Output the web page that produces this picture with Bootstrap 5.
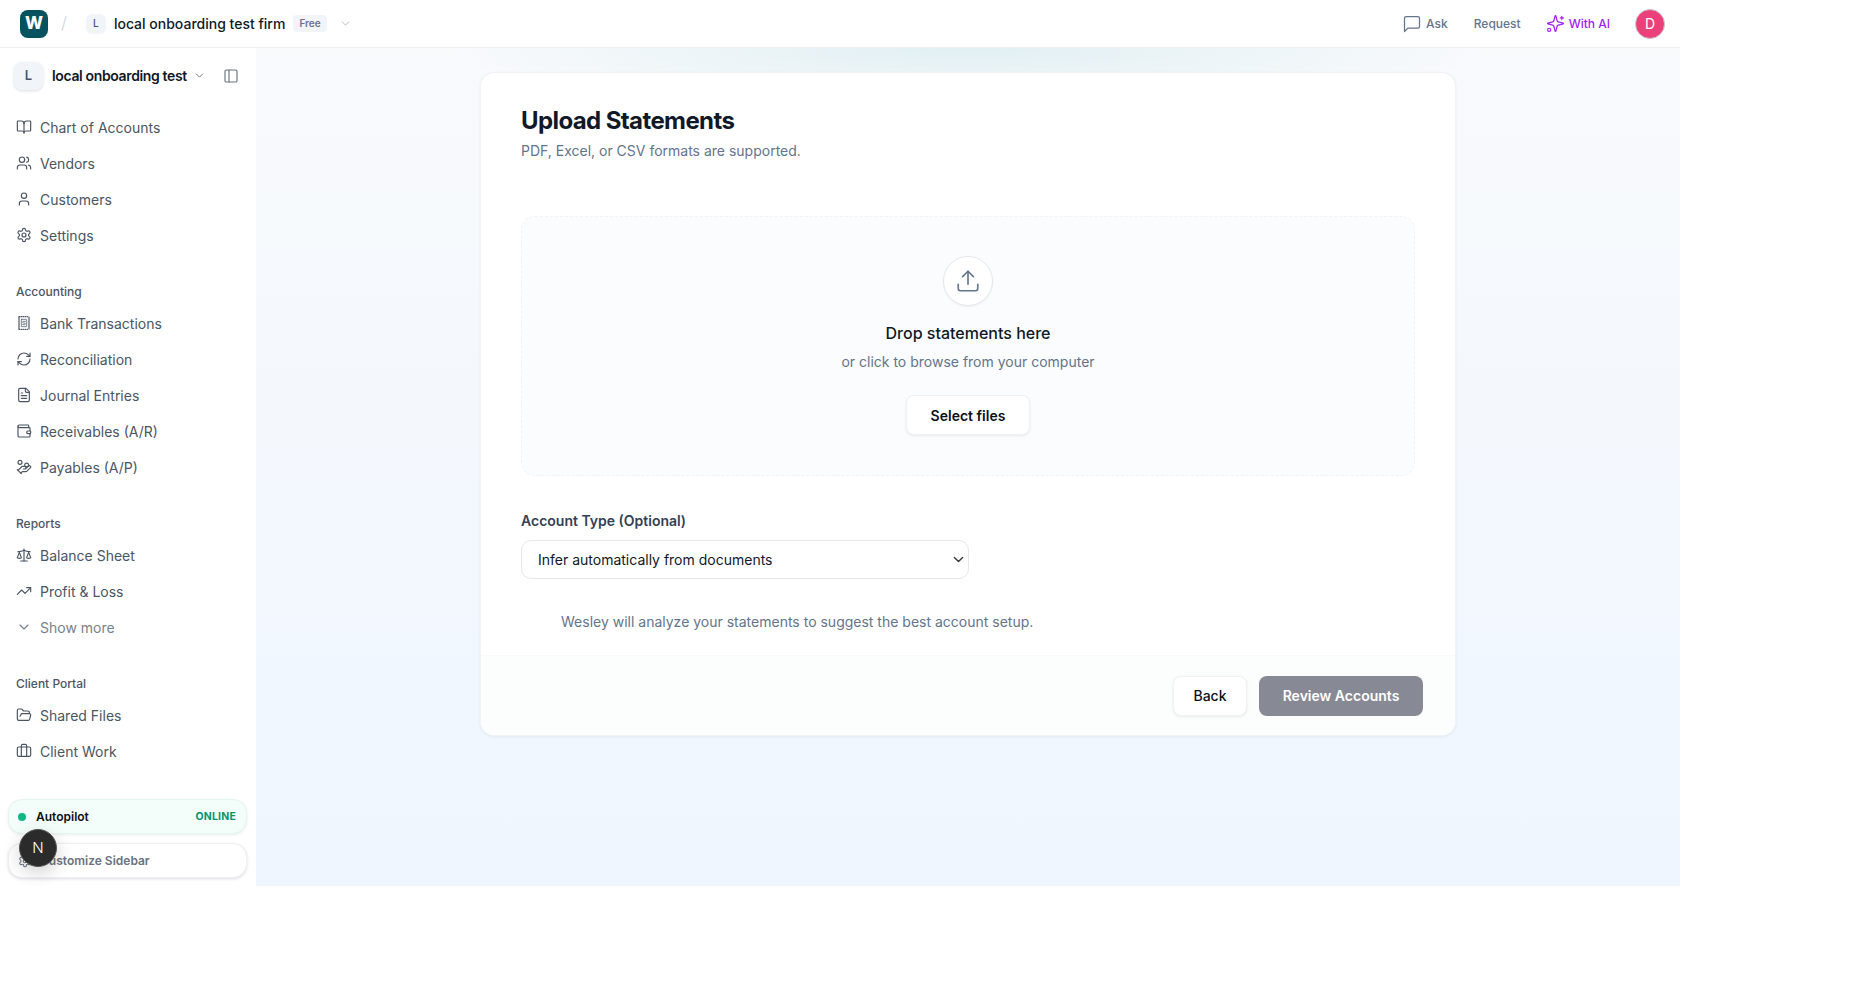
<!DOCTYPE html>
<html lang="en">
<head>
    <meta charset="UTF-8">
    <meta name="viewport" content="width=device-width, initial-scale=1.0">
    <title>Upload Statements</title>
    <link href="https://cdn.jsdelivr.net/npm/bootstrap@5.3.0/dist/css/bootstrap.min.css" rel="stylesheet">
    <style>
        body { font-family: Inter, "Liberation Sans", sans-serif; background: #fff; color: #0f172a; font-size: 14px; }
        .ico { fill: none; stroke: currentColor; stroke-width: 1.75; stroke-linecap: round; stroke-linejoin: round; flex-shrink: 0; }
        .ico-thin { stroke-width: 1.5; }
        .app-frame { width: 1680px; height: 886px; position: relative; overflow: hidden; }
        .top-bar { height: 48px; border-bottom: 1px solid #eef0f3; padding: 0 15px 0 20px; background: #fff; }
        .logo-box { width: 28px; height: 28px; border-radius: 8px; background: #06535f; color: #fff; font-weight: 800; font-size: 17px; }
        .crumb-slash { color: #cbd5e1; font-size: 17px; margin: 0 19px 0 13px; font-weight: 300; }
        .firm-chip { width: 20px; height: 20px; border-radius: 6px; background: #f1f5f9; color: #475569; font-size: 10px; font-weight: 500; margin-right: 8px; }
        .firm-name { font-weight: 500; font-size: 14px; color: #111827; }
        .free-tag { background: #f1f5f9; color: #64748b; font-size: 10px; font-weight: 600; border-radius: 4px; padding: 0 6px; height: 17px; line-height: 17px; margin: 0 12px 0 8px; }
        .top-link { color: #64748b; font-size: 12px; font-weight: 500; gap: 4px; }
        .link-ask { margin-right: 26px; }
        .link-request { margin-right: 25px; }
        .ai-link { color: #a21cf5; margin-right: 25px; }
        .user-dot { width: 30px; height: 30px; border-radius: 50%; background: #ec407a; color: #fff; font-size: 14px; border: 1px solid #c9c9cf; }
        .side-col { width: 256px; background: #fff; flex-shrink: 0; }
        .switch-row { height: 55px; padding: 0 17px 0 14px; }
        .switch-chip { width: 29px; height: 28px; border-radius: 8px; background: #f1f5f9; color: #475569; font-weight: 600; font-size: 13px; box-shadow: 0 1px 3px rgba(15,23,42,.14); margin-right: 9px; }
        .switch-name { font-weight: 600; font-size: 14px; letter-spacing: -.36px; color: #111827; margin-right: 6px; }
        .side-nav { margin-top: 6px; }
        .side-link { height: 36px; padding-left: 16px; gap: 8px; color: #4b5563; font-size: 14px; }
        .side-link.muted-link { color: #7b818c; }
        .side-head { height: 18px; line-height: 18px; padding-left: 16px; margin: 30px 0 4px; font-size: 12px; font-weight: 500; color: #4b5563; }
        .pill-box { height: 35px; margin: 0 9px 0 8px; border-radius: 14px; font-size: 12px; font-weight: 600; padding: 0 10px 0 9px; }
        .pilot-box { background: #f3fdf9; border: 1px solid #e3f6ee; box-shadow: 0 1px 3px rgba(15,23,42,.08); color: #0b0f19; margin-bottom: 9px; }
        .pilot-dot { width: 8px; height: 8px; border-radius: 50%; background: #10b981; margin-right: 10px; }
        .pilot-state { font-size: 10.5px; font-weight: 700; letter-spacing: .2px; color: #059669; }
        .custom-box { background: #fff; border: 1px solid #eef0f3; box-shadow: 0 1px 3px rgba(15,23,42,.14); color: #6b7280; gap: 8px; }
        .next-badge { position: absolute; left: 19px; top: 829px; width: 38px; height: 38px; border-radius: 50%; background: #2b2b2b; color: #fff; font-size: 15px; font-weight: 300; border: 1px solid #555; box-shadow: 0 6px 18px rgba(0,0,0,.18); }
        .main-area { flex: 1; padding-top: 24px; background: radial-gradient(ellipse 520px 60px at 50% 0, #e1eff3 0, rgba(225,239,243,0) 100%), linear-gradient(180deg, #f8fafc 0, #eff6ff 100%); }
        .upload-card { width: 976px; height: 664px; background: #fff; border: 1px solid #f1f3f5; border-radius: 14px; box-shadow: 0 1px 3px rgba(15,23,42,.06); overflow: hidden; }
        .card-inner { padding: 32px 40px 0; height: 582px; }
        .upload-title { font-size: 24px; font-weight: 700; line-height: 32px; letter-spacing: -.6px; margin: 0 0 4px; color: #111827; }
        .upload-sub { font-size: 14px; line-height: 20px; color: #64748b; margin: 0 0 55px; }
        .drop-zone { height: 260px; background: #fbfcfd; border: 1px dashed #f1f3f6; border-radius: 14px; padding-top: 39px; }
        .drop-circle { width: 50px; height: 50px; border-radius: 50%; background: #fff; border: 1px solid #e5e7eb; color: #64748b; box-shadow: 0 1px 2px rgba(15,23,42,.05); }
        .drop-title { font-size: 16px; font-weight: 500; line-height: 24px; margin: 15px 0 7px; color: #111827; }
        .drop-sub { font-size: 14px; line-height: 20px; color: #64748b; margin: 0 0 23px; }
        .soft-btn { background: #fff; border: 1px solid #f0f1f3; border-radius: 8px; box-shadow: 0 1px 3px rgba(15,23,42,.08); font-size: 14px; color: #0b0f19; font-weight: 600; height: 40px; }
        .back-btn { width: 74px; font-weight: 500; }
        .field-label { display: block; font-size: 14px; font-weight: 600; color: #334155; line-height: 20px; margin: 35px 0 9px; }
        .type-select { width: 448px; height: 39px; padding: 0 30px 0 16px; border: 1px solid #e5e7eb; border-radius: 10px; font-size: 14px; color: #111827; background-position: right 4px center; background-size: 11px; box-shadow: none; }
        .help-line { padding-left: 40px; line-height: 20px; color: #64748b; font-size: 14px; margin: 33px 0 0; }
        .card-foot { height: 80px; background: #fcfdfd; border-top: 1px solid #f8f9fa; padding-right: 32px; gap: 12px; }
        .review-btn { background: #878a94; color: #fff; border: 0; border-radius: 8px; font-size: 14px; font-weight: 600; height: 40px; width: 164px; }
    </style>
</head>
<body>
    <svg width="0" height="0" class="position-absolute">
        <defs>
            <symbol id="i-book" viewBox="0 0 24 24"><path d="M12 7v14"/><path d="M3 18a1 1 0 0 1-1-1V4a1 1 0 0 1 1-1h5a4 4 0 0 1 4 4 4 4 0 0 1 4-4h5a1 1 0 0 1 1 1v13a1 1 0 0 1-1 1h-6a3 3 0 0 0-3 3 3 3 0 0 0-3-3z"/></symbol>
            <symbol id="i-users" viewBox="0 0 24 24"><path d="M16 21v-2a4 4 0 0 0-4-4H6a4 4 0 0 0-4 4v2"/><circle cx="9" cy="7" r="4"/><path d="M22 21v-2a4 4 0 0 0-3-3.87"/><path d="M16 3.13a4 4 0 0 1 0 7.75"/></symbol>
            <symbol id="i-user" viewBox="0 0 24 24"><path d="M19 21v-2a4 4 0 0 0-4-4H9a4 4 0 0 0-4 4v2"/><circle cx="12" cy="7" r="4"/></symbol>
            <symbol id="i-gear" viewBox="0 0 24 24"><path d="M12.22 2h-.44a2 2 0 0 0-2 2v.18a2 2 0 0 1-1 1.73l-.43.25a2 2 0 0 1-2 0l-.15-.08a2 2 0 0 0-2.73.73l-.22.38a2 2 0 0 0 .73 2.73l.15.1a2 2 0 0 1 1 1.72v.51a2 2 0 0 1-1 1.74l-.15.09a2 2 0 0 0-.73 2.73l.22.38a2 2 0 0 0 2.73.73l.15-.08a2 2 0 0 1 2 0l.43.25a2 2 0 0 1 1 1.73V20a2 2 0 0 0 2 2h.44a2 2 0 0 0 2-2v-.18a2 2 0 0 1 1-1.73l.43-.25a2 2 0 0 1 2 0l.15.08a2 2 0 0 0 2.73-.73l.22-.39a2 2 0 0 0-.73-2.73l-.15-.08a2 2 0 0 1-1-1.74v-.5a2 2 0 0 1 1-1.74l.15-.09a2 2 0 0 0 .73-2.73l-.22-.38a2 2 0 0 0-2.73-.73l-.15.08a2 2 0 0 1-2 0l-.43-.25a2 2 0 0 1-1-1.73V4a2 2 0 0 0-2-2z"/><circle cx="12" cy="12" r="3"/></symbol>
            <symbol id="i-bank" viewBox="0 0 24 24"><path d="M4.5 3v18"/><path d="M19.5 3v18"/><path d="M4.5 2.5h15" stroke-dasharray="1 2"/><path d="M4.5 21.5h15" stroke-dasharray="1 2"/><rect x="8" y="6.5" width="8" height="11" rx=".5" stroke-width="1.1"/><path d="M14 9.5h-2.8a1.2 1.2 0 0 0 0 2.5h1.6a1.2 1.2 0 0 1 0 2.5H10" stroke-width="1.1"/></symbol>
            <symbol id="i-sync" viewBox="0 0 24 24"><path d="M3 12a9 9 0 0 1 9-9 9.75 9.75 0 0 1 6.74 2.74L21 8"/><path d="M21 3v5h-5"/><path d="M21 12a9 9 0 0 1-9 9 9.75 9.75 0 0 1-6.74-2.74L3 16"/><path d="M8 16H3v5"/></symbol>
            <symbol id="i-file" viewBox="0 0 24 24"><path d="M15 2H6a2 2 0 0 0-2 2v16a2 2 0 0 0 2 2h12a2 2 0 0 0 2-2V7Z"/><path d="M14 2v4a2 2 0 0 0 2 2h4"/><path d="M10 9H8"/><path d="M16 13H8"/><path d="M16 17H8"/></symbol>
            <symbol id="i-wallet" viewBox="0 0 24 24"><path d="M19 7V4a1 1 0 0 0-1-1H5a2 2 0 0 0 0 4h15a1 1 0 0 1 1 1v4h-3a2 2 0 0 0 0 4h3a1 1 0 0 0 1-1v-2a1 1 0 0 0-1-1"/><path d="M3 5v14a2 2 0 0 0 2 2h15a1 1 0 0 0 1-1v-4"/></symbol>
            <symbol id="i-coins" viewBox="0 0 24 24"><path d="M11 15h2a2 2 0 1 0 0-4h-3c-.6 0-1.1.2-1.4.6L3 17"/><path d="m7 21 1.6-1.4c.3-.4.8-.6 1.4-.6h4c1.1 0 2.1-.4 2.8-1.2l4.6-4.4a2 2 0 0 0-2.75-2.91l-4.2 3.9"/><path d="m2 16 6 6"/><circle cx="16" cy="9" r="2.9"/><circle cx="6" cy="5" r="3"/></symbol>
            <symbol id="i-scale" viewBox="0 0 24 24"><path d="m16 16 3-8 3 8c-.87.65-1.92 1-3 1s-2.13-.35-3-1Z"/><path d="m2 16 3-8 3 8c-.87.65-1.92 1-3 1s-2.13-.35-3-1Z"/><path d="M7 21h10"/><path d="M12 3v18"/><path d="M3 7h2c2 0 5-1 7-2 2 1 5 2 7 2h2"/></symbol>
            <symbol id="i-trend" viewBox="0 0 24 24"><polyline points="22 7 13.5 15.5 8.5 10.5 2 17"/><polyline points="16 7 22 7 22 13"/></symbol>
            <symbol id="i-down" viewBox="0 0 24 24"><path d="m6 9 6 6 6-6"/></symbol>
            <symbol id="i-folder" viewBox="0 0 24 24"><path d="m6 14 1.5-2.9A2 2 0 0 1 9.24 10H20a2 2 0 0 1 1.94 2.5l-1.54 6a2 2 0 0 1-1.95 1.5H4a2 2 0 0 1-2-2V5a2 2 0 0 1 2-2h3.9a2 2 0 0 1 1.69.9l.81 1.2a2 2 0 0 0 1.67.9H18a2 2 0 0 1 2 2v2"/></symbol>
            <symbol id="i-case" viewBox="0 0 24 24"><path d="M16 20V4a2 2 0 0 0-2-2h-4a2 2 0 0 0-2 2v16"/><rect x="2" y="6" width="20" height="14" rx="2"/></symbol>
            <symbol id="i-panel" viewBox="0 0 24 24"><rect x="3" y="3" width="18" height="18" rx="2"/><path d="M9 3v18"/></symbol>
            <symbol id="i-chat" viewBox="0 0 24 24"><path d="M21 15a2 2 0 0 1-2 2H7l-4 4V5a2 2 0 0 1 2-2h14a2 2 0 0 1 2 2z"/></symbol>
            <symbol id="i-spark" viewBox="0 0 24 24"><path d="M9.937 15.5A2 2 0 0 0 8.5 14.063l-6.135-1.582a.5.5 0 0 1 0-.962L8.5 9.936A2 2 0 0 0 9.937 8.5l1.582-6.135a.5.5 0 0 1 .963 0L14.063 8.5A2 2 0 0 0 15.5 9.937l6.135 1.581a.5.5 0 0 1 0 .964L15.5 14.063a2 2 0 0 0-1.437 1.437l-1.582 6.135a.5.5 0 0 1-.963 0z"/><path d="M20 3v4"/><path d="M22 5h-4"/><circle cx="4" cy="20" r="2"/></symbol>
            <symbol id="i-upload" viewBox="0 0 24 24"><path d="M21 15v4a2 2 0 0 1-2 2H5a2 2 0 0 1-2-2v-4"/><polyline points="17 8 12 3 7 8"/><line x1="12" y1="3" x2="12" y2="15"/></symbol>
        </defs>
    </svg>

    <div class="app-frame d-flex flex-column">
        <header class="top-bar d-flex align-items-center flex-shrink-0">
            <div class="logo-box d-flex align-items-center justify-content-center">W</div>
            <span class="crumb-slash">/</span>
            <div class="firm-chip d-flex align-items-center justify-content-center">L</div>
            <span class="firm-name">local onboarding test firm</span>
            <span class="free-tag">Free</span>
            <svg class="ico text-secondary opacity-50" width="13" height="13"><use href="#i-down"/></svg>
            <div class="ms-auto d-flex align-items-center">
                <span class="top-link link-ask d-flex align-items-center"><svg class="ico ico-thin" width="20" height="20"><use href="#i-chat"/></svg>Ask</span>
                <span class="top-link link-request">Request</span>
                <span class="top-link ai-link d-flex align-items-center"><svg class="ico ico-thin" width="19" height="19"><use href="#i-spark"/></svg>With AI</span>
                <div class="user-dot d-flex align-items-center justify-content-center">D</div>
            </div>
        </header>

        <div class="d-flex flex-grow-1">
            <aside class="side-col d-flex flex-column">
                <div class="switch-row d-flex align-items-center">
                    <div class="switch-chip d-flex align-items-center justify-content-center">L</div>
                    <span class="switch-name">local onboarding test</span>
                    <svg class="ico text-secondary" width="13" height="13"><use href="#i-down"/></svg>
                    <svg class="ico text-secondary ms-auto" width="16" height="16"><use href="#i-panel"/></svg>
                </div>
                <nav class="side-nav d-flex flex-column">
                    <a class="side-link d-flex align-items-center text-decoration-none"><svg class="ico" width="16" height="16"><use href="#i-book"/></svg>Chart of Accounts</a>
                    <a class="side-link d-flex align-items-center text-decoration-none"><svg class="ico" width="16" height="16"><use href="#i-users"/></svg>Vendors</a>
                    <a class="side-link d-flex align-items-center text-decoration-none"><svg class="ico" width="16" height="16"><use href="#i-user"/></svg>Customers</a>
                    <a class="side-link d-flex align-items-center text-decoration-none"><svg class="ico" width="16" height="16"><use href="#i-gear"/></svg>Settings</a>
                    <div class="side-head">Accounting</div>
                    <a class="side-link d-flex align-items-center text-decoration-none"><svg class="ico" width="16" height="16"><use href="#i-bank"/></svg>Bank Transactions</a>
                    <a class="side-link d-flex align-items-center text-decoration-none"><svg class="ico" width="16" height="16"><use href="#i-sync"/></svg>Reconciliation</a>
                    <a class="side-link d-flex align-items-center text-decoration-none"><svg class="ico" width="16" height="16"><use href="#i-file"/></svg>Journal Entries</a>
                    <a class="side-link d-flex align-items-center text-decoration-none"><svg class="ico" width="16" height="16"><use href="#i-wallet"/></svg>Receivables (A/R)</a>
                    <a class="side-link d-flex align-items-center text-decoration-none"><svg class="ico" width="16" height="16"><use href="#i-coins"/></svg>Payables (A/P)</a>
                    <div class="side-head">Reports</div>
                    <a class="side-link d-flex align-items-center text-decoration-none"><svg class="ico" width="16" height="16"><use href="#i-scale"/></svg>Balance Sheet</a>
                    <a class="side-link d-flex align-items-center text-decoration-none"><svg class="ico" width="16" height="16"><use href="#i-trend"/></svg>Profit &amp; Loss</a>
                    <a class="side-link muted-link d-flex align-items-center text-decoration-none"><svg class="ico" width="16" height="16"><use href="#i-down"/></svg>Show more</a>
                    <div class="side-head">Client Portal</div>
                    <a class="side-link d-flex align-items-center text-decoration-none"><svg class="ico" width="16" height="16"><use href="#i-folder"/></svg>Shared Files</a>
                    <a class="side-link d-flex align-items-center text-decoration-none"><svg class="ico" width="16" height="16"><use href="#i-case"/></svg>Client Work</a>
                </nav>
                <div class="mt-auto pb-2">
                    <div class="pill-box pilot-box d-flex align-items-center">
                        <span class="pilot-dot"></span>Autopilot
                        <span class="pilot-state ms-auto">ONLINE</span>
                    </div>
                    <div class="pill-box custom-box d-flex align-items-center">
                        <svg class="ico" width="14" height="14"><use href="#i-gear"/></svg>Customize Sidebar
                    </div>
                </div>
            </aside>

            <main class="main-area">
                <div class="upload-card mx-auto">
                    <div class="card-inner">
                        <h1 class="upload-title">Upload Statements</h1>
                        <p class="upload-sub">PDF, Excel, or CSV formats are supported.</p>
                        <div class="drop-zone d-flex flex-column align-items-center">
                            <div class="drop-circle d-flex align-items-center justify-content-center">
                                <svg class="ico ico-thin" width="26" height="26"><use href="#i-upload"/></svg>
                            </div>
                            <div class="drop-title">Drop statements here</div>
                            <p class="drop-sub">or click to browse from your computer</p>
                            <button type="button" class="btn soft-btn px-4">Select files</button>
                        </div>
                        <label class="field-label" for="accountType">Account Type (Optional)</label>
                        <select class="form-select type-select" id="accountType">
                            <option>Infer automatically from documents</option>
                        </select>
                        <p class="help-line">Wesley will analyze your statements to suggest the best account setup.</p>
                    </div>
                    <div class="card-foot d-flex align-items-center justify-content-end">
                        <button type="button" class="btn soft-btn back-btn px-0">Back</button>
                        <button type="button" class="btn review-btn px-0">Review Accounts</button>
                    </div>
                </div>
            </main>
        </div>

        <div class="next-badge d-flex align-items-center justify-content-center">N</div>
    </div>

    <script src="https://cdn.jsdelivr.net/npm/bootstrap@5.3.0/dist/js/bootstrap.bundle.min.js"></script>
</body>
</html>
